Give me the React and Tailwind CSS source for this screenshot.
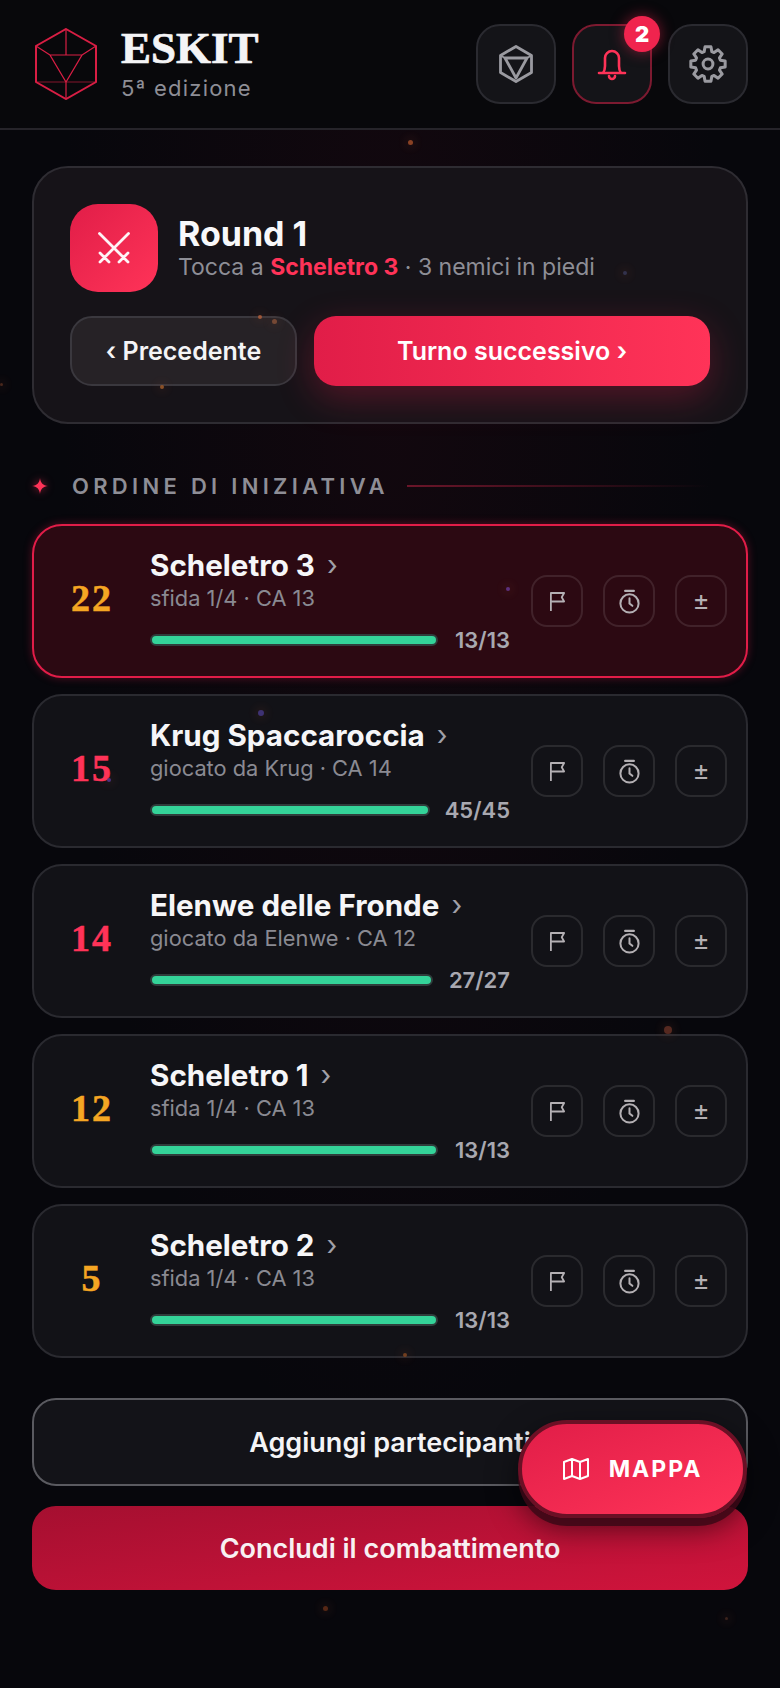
const INTER = 'font-["Inter",sans-serif]'
const SERIF = 'font-["Liberation_Serif",serif]'

const COMBATANTS = [
  { init: '22', name: 'Scheletro 3', sub: 'sfida 1/4 · CA 13', hp: '13/13', bar: 'w-[288px]', gold: true, active: true },
  { init: '15', name: 'Krug Spaccaroccia', sub: 'giocato da Krug · CA 14', hp: '45/45', bar: 'w-[280px]' },
  { init: '14', name: 'Elenwe delle Fronde', sub: 'giocato da Elenwe · CA 12', hp: '27/27', bar: 'w-[283px]' },
  { init: '12', name: 'Scheletro 1', sub: 'sfida 1/4 · CA 13', hp: '13/13', bar: 'w-[288px]', gold: true },
  { init: '5', name: 'Scheletro 2', sub: 'sfida 1/4 · CA 13', hp: '13/13', bar: 'w-[288px]', gold: true },
]

// embers floating above the page: [left, top, size, colour]
const EMBERS = [
  ['left-[408px]', 'top-[140px]', 'size-[5px]', 'bg-[#a8502a]'],
  ['left-[258px]', 'top-[315px]', 'size-[4px]', 'bg-[#b8603a]'],
  ['left-[272px]', 'top-[319px]', 'size-[5px]', 'bg-[#8a5238]'],
  ['left-[160px]', 'top-[385px]', 'size-[4px]', 'bg-[#a8602a]'],
  ['left-[623px]', 'top-[271px]', 'size-[4px]', 'bg-[#3a3a5a]'],
  ['left-[506px]', 'top-[587px]', 'size-[4px]', 'bg-[#6a3a9a]'],
  ['left-[258px]', 'top-[710px]', 'size-[6px]', 'bg-[#4a3a8a]'],
  ['left-[107px]', 'top-[778px]', 'size-[4px]', 'bg-[#5a3a9a]'],
  ['left-[664px]', 'top-[1026px]', 'size-[8px]', 'bg-[#6a3226]'],
  ['left-[403px]', 'top-[1353px]', 'size-[4px]', 'bg-[#8a4a22]'],
  ['left-[323px]', 'top-[1606px]', 'size-[5px]', 'bg-[#6a3018]'],
  ['left-[725px]', 'top-[1617px]', 'size-[3px]', 'bg-[#4a2a20]'],
  ['left-[0px]', 'top-[383px]', 'size-[3px]', 'bg-[#5a3020]'],
]

// eight wide teeth, same outline as the reference's cog
function gearPath() {
  const pts = []
  for (let i = 0; i < 8; i++) {
    const a = (i * Math.PI) / 4 - Math.PI / 2
    for (const [r, d] of [[8.2, -0.3], [11, -0.17], [11, 0.17], [8.2, 0.3]]) {
      pts.push(`${(12 + r * Math.cos(a + d)).toFixed(2)} ${(12 + r * Math.sin(a + d)).toFixed(2)}`)
    }
  }
  return `M${pts.join('L')}Z`
}
const GEAR_PATH = gearPath()

function D20({ className }) {
  return (
    <svg viewBox="0 0 62 72" fill="none" stroke="currentColor" className={className}>
      <path d="M31 1 61 18v36L31 71 1 54V18Z" strokeWidth="2" />
      <path d="M31 1v26M1 18l14 9M61 18 47 27M15 27h32L31 54Z M31 54v17" strokeWidth="1.2" />
      <path d="M1 54h60" strokeWidth="1.2" opacity="0.6" />
    </svg>
  )
}

function DieIcon() {
  return (
    <svg viewBox="0 0 34 38" fill="none" stroke="currentColor" strokeWidth="2.8" strokeLinejoin="round" className="w-[34px] h-[38px] text-[#9a9aa0]">
      <path d="M17 1.500 32.500 10.500V27.500L17 36.500 1.500 27.500V10.500Z" />
      <path d="M6 13h22L17 33Z" />
      <path d="M1.500 10.500 6 13M32.500 10.500 28 13" strokeWidth="2" />
    </svg>
  )
}

function BellIcon() {
  return (
    <svg viewBox="0 0 30 34" fill="none" stroke="currentColor" strokeWidth="2.600" strokeLinecap="round" strokeLinejoin="round" className="w-[30px] h-[34px] text-[#ff3358]">
      <path d="M2 26h26M6 26c1.500-2 2-4 2-7v-8a7 7 0 0 1 14 0v8c0 3 .5 5 2 7" />
      <path d="M12 29a3 3 0 0 0 6 0" />
    </svg>
  )
}

function GearIcon() {
  return (
    <svg viewBox="0 0 24 24" fill="none" stroke="currentColor" strokeWidth="1.900" strokeLinejoin="round" className="w-[38px] h-[38px] text-[#9a9aa0]">
      <path d={GEAR_PATH} />
      <circle cx="12" cy="12" r="3.100" />
    </svg>
  )
}

function SwordsIcon() {
  return (
    <svg viewBox="0 0 32 32" fill="none" stroke="white" strokeWidth="2.800" strokeLinecap="round" className="w-[32px] h-[32px] opacity-95">
      <path d="M1.500 1.500 30 30M30.500 1.500 2 30M2 21l9 9M21 30l9-9" />
    </svg>
  )
}

function FlagIcon() {
  return (
    <svg viewBox="0 0 18 22" fill="none" stroke="currentColor" strokeWidth="1.900" strokeLinejoin="round" className="w-[17px] h-[21px]">
      <path d="M2 21V2h14l-2.500 4.500L16 11H2" />
    </svg>
  )
}

function TimerIcon() {
  return (
    <svg viewBox="0 0 24 26" fill="none" stroke="currentColor" strokeWidth="2.100" strokeLinecap="round" className="w-[23px] h-[25px]">
      <circle cx="12" cy="15" r="9.500" />
      <path d="M7.500 2h9" strokeWidth="2.400" />
      <path d="M12 9.500V15l3 2.500" />
    </svg>
  )
}

function MapIcon() {
  return (
    <svg viewBox="0 0 26 24" fill="none" stroke="white" strokeWidth="2" strokeLinejoin="round" className="w-[26px] h-[24px]">
      <path d="M1 5 9 2l8 3 8-3v17l-8 3-8-3-8 3ZM9 2v17M17 5v17" />
    </svg>
  )
}

function SparkIcon() {
  return (
    <svg viewBox="0 0 16 16" className="w-[16px] h-[16px] text-[#ff3358] drop-shadow-[0_0_4px_rgba(255,51,88,0.6)]" fill="currentColor">
      <path d="M8 0C8.500 5 11 7.500 16 8 11 8.500 8.500 11 8 16 7.500 11 5 8.500 0 8 5 7.500 7.500 5 8 0Z" />
    </svg>
  )
}

function ActionButton({ children }) {
  return (
    <button className="size-[52px] shrink-0 flex items-center justify-center rounded-[16px] border-2 border-white/10 text-[#b4b0b4]">
      {children}
    </button>
  )
}

function CombatantRow({ c }) {
  const frame = c.active
    ? 'border-[#e11d48] bg-[#2c0912] shadow-[0_0_8px_rgba(225,29,72,0.35)]'
    : 'border-[#2a2a30] bg-[#121217]'
  return (
    <div className={`h-[154px] flex items-center rounded-[30px] border-2 pl-[18px] pr-[19px] ${frame}`}>
      <div className={`w-[80px] shrink-0 text-center text-[38px] font-bold tracking-[2px] leading-none mt-[-7px] [-webkit-text-stroke:0.5px_currentColor] ${SERIF} ${c.gold ? 'text-[#f5a623]' : 'text-[#ff3358]'}`}>
        {c.init}
      </div>
      <div className="w-[360px] shrink-0 ml-[18px] self-start mt-[21px]">
        <div className="flex items-center h-[38px] text-[29.600px] font-bold text-[#f6f6f8] leading-none whitespace-nowrap">
          {c.name}
          <span className="ml-[12px] text-[#a0a0a8] font-normal text-[28px] leading-none mt-[-2px]">›</span>
        </div>
        <div className="text-[21.800px] text-[#8a8a92] leading-[28px] mt-[-1px]">{c.sub}</div>
        <div className="flex items-center justify-between mt-[17px]">
          <div className={`${c.bar} h-[12px] rounded-full border-2 border-[#2f3d3c] bg-[#34d399]`} />
          <span className="text-[22px] font-semibold text-[#a8a8b0] leading-none">{c.hp}</span>
        </div>
      </div>
      <div className="ml-auto flex gap-[20px]">
        <ActionButton><FlagIcon /></ActionButton>
        <ActionButton><TimerIcon /></ActionButton>
        <ActionButton><span className="text-[26px] leading-none">±</span></ActionButton>
      </div>
    </div>
  )
}

export default function App() {
  return (
    <div className={`relative w-[780px] h-[1688px] overflow-hidden bg-[#07070c] ${INTER}`}>
      {/* soft red wash behind the page */}
      <div className="absolute inset-0 bg-[radial-gradient(ellipse_at_50%_20%,rgba(70,10,25,0.18),transparent_60%)]" />

      {EMBERS.map(([l, t, s, c], i) => (
        <div key={i} className={`absolute z-20 rounded-full opacity-80 shadow-[0_0_10px_3px_rgba(160,80,50,0.18)] ${l} ${t} ${s} ${c}`} />
      ))}

      <div className="relative">
        {/* Header */}
        <header className="h-[130px] flex items-center pl-[35px] pr-[32px] border-b-2 border-[#26242a] bg-[#08080b]">
          <D20 className="w-[62px] h-[72px] text-[#d81e44]" />
          <div className="ml-[24px]">
            <div className={`text-[45px] font-bold leading-[46px] mt-[-2px] text-[#f4f4f6] [-webkit-text-stroke:0.7px_currentColor] ${SERIF}`}>ESKIT</div>
            <div className="text-[22px] tracking-[1.200px] leading-[28px] mt-[3px] text-[#8e8e96]">5ª edizione</div>
          </div>
          <div className="ml-auto flex gap-[16px]">
            <button className="size-[80px] flex items-center justify-center rounded-[24px] border-2 border-[#2a2a30] bg-[#141418]">
              <DieIcon />
            </button>
            <button className="relative size-[80px] flex items-center justify-center rounded-[24px] border-2 border-[#7c1a30] bg-[#141418]">
              <BellIcon />
              <span className="absolute top-[-10px] right-[-10px] size-[36px] flex items-center justify-center rounded-full bg-[#f0244e] text-[22px] font-black text-white shadow-[0_0_14px_rgba(240,36,78,0.5)]">2</span>
            </button>
            <button className="size-[80px] flex items-center justify-center rounded-[24px] border-2 border-[#2a2a30] bg-[#141418]">
              <GearIcon />
            </button>
          </div>
        </header>

        <main className="px-[32px] pt-[36px]">
          {/* Round card */}
          <section className="h-[258px] rounded-[36px] border-2 border-[#2e2c32] bg-[#161318] p-[36px]">
            <div className="flex items-center">
              <div className="size-[88px] flex items-center justify-center rounded-[28px] bg-gradient-to-br from-[#e11d48] to-[#ff3358]">
                <SwordsIcon />
              </div>
              <div className="ml-[20px]">
                <div className="text-[34px] font-bold leading-[38px] text-[#f8f8fa]">Round 1</div>
                <div className="text-[23px] leading-[28px] text-[#8e8e96]">
                  Tocca a <span className="font-bold text-[#ff3358]">Scheletro 3</span> · 3 nemici in piedi
                </div>
              </div>
            </div>
            <div className="flex gap-[17px] mt-[24px]">
              <button className="w-[227px] h-[70px] pt-[2px] rounded-[22px] border-2 border-[#3a383e] bg-[#262226] text-[25px] font-semibold text-[#f4f4f6]">
                ‹ Precedente
              </button>
              <button className="w-[396px] h-[70px] pt-[2px] rounded-[22px] bg-gradient-to-r from-[#e11d48] to-[#ff3358] text-[25px] font-semibold text-white shadow-[0_12px_36px_rgba(225,29,72,0.3)]">
                Turno successivo ›
              </button>
            </div>
          </section>

          {/* Initiative list */}
          <div className="flex items-center mt-[48px] h-[28px]">
            <SparkIcon />
            <span className="ml-[24px] text-[22px] font-semibold tracking-[4.300px] leading-none text-[#8e8e96] whitespace-nowrap">ORDINE DI INIZIATIVA</span>
            <span className="ml-[18px] w-[302px] h-[2px] bg-gradient-to-r from-[#6b1529] to-transparent" />
          </div>

          <div className="flex flex-col gap-[16px] mt-[24px]">
            {COMBATANTS.map((c) => (
              <CombatantRow key={c.name} c={c} />
            ))}
          </div>

          {/* Footer actions */}
          <button className="w-full h-[88px] mt-[40px] pt-[2px] rounded-[24px] border-2 border-[#5a5a60] bg-[#131318] text-[27px] font-semibold text-[#f4f4f6]">
            Aggiungi partecipanti
          </button>
          <button className="w-full h-[84px] mt-[20px] pt-[2px] rounded-[24px] bg-gradient-to-br from-[#a50f30] to-[#d0143c] text-[27px] font-semibold text-[#f8f0f2]">
            Concludi il combattimento
          </button>
        </main>
      </div>

      {/* Floating map button */}
      <button className="absolute z-10 left-[518px] top-[1420px] w-[229px] h-[98px] flex items-center justify-center gap-[20px] rounded-full border-[4px] border-[#6b1025] bg-gradient-to-br from-[#e11d48] to-[#ff3358] text-[23px] font-bold tracking-[2px] text-white shadow-[0_8px_0_rgba(60,8,22,0.85),0_10px_30px_rgba(0,0,0,0.55)]">
        <MapIcon />
        MAPPA
      </button>
    </div>
  )
}
